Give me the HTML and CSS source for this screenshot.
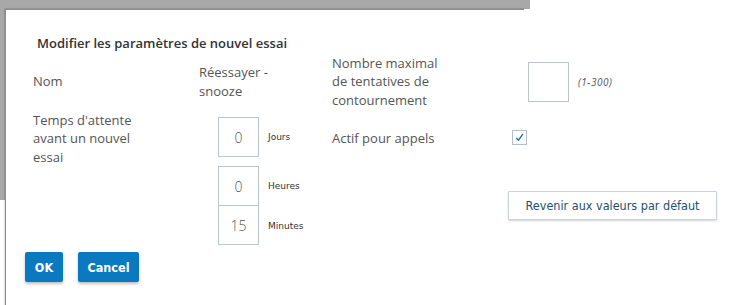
FILE: index.html
```html
<!DOCTYPE html>
<html lang="fr">
<head>
<meta charset="utf-8">
<title>Modifier les paramètres de nouvel essai</title>
<link rel="stylesheet" href="styles.css">
</head>
<body>
<div class="page">
  <div class="backdrop"></div>
  <div class="dialog">
    <h1 class="title">Modifier les paramètres de nouvel essai</h1>
    <div class="form">
      <div class="label r1">Nom</div>
      <div class="label r1">Réessayer -<br>snooze</div>
      <div class="label r1">Nombre maximal<br>de tentatives de<br>contournement</div>
      <div class="field r1 max-field">
        <div class="box"></div>
        <span class="range">(1-300)</span>
      </div>

      <div class="label ra">Temps d'attente<br>avant un nouvel<br>essai</div>
      <div class="unit-row ra jours">
        <div class="box">0</div>
        <span class="unit">Jours</span>
      </div>
      <div class="label ra">Actif pour appels</div>
      <div class="field ra">
        <span class="check">
          <svg width="9" height="9" viewBox="0 0 9 9"><path d="M1.6 5.2 L3.5 7.2 L7.6 1.4" fill="none" stroke="#1f6fb2" stroke-width="1.4" stroke-linecap="round" stroke-linejoin="round"/></svg>
        </span>
      </div>

      <div class="unit-row rb">
        <div class="box">0</div>
        <span class="unit">Heures</span>
      </div>
      <div class="unit-row rc">
        <div class="box box-joined">15</div>
        <span class="unit">Minutes</span>
      </div>
      <div class="reset-cell">
        <button class="reset">Revenir aux valeurs par défaut</button>
      </div>
    </div>
    <div class="actions">
      <button class="btn btn-ok">OK</button>
      <button class="btn btn-cancel">Cancel</button>
    </div>
  </div>
</div>
</body>
</html>
```
FILE: styles.css
```css
html, body {
  margin: 0;
  padding: 0;
  background: #ffffff;
}
body {
  font-family: "Open Sans", "Liberation Sans", sans-serif;
  width: 735px;
  height: 305px;
  overflow: hidden;
}
.page {
  position: relative;
  width: 735px;
  height: 305px;
}
.backdrop {
  width: 530px;
  height: 200px;
  background: #a8a8a8;
}
.dialog {
  position: absolute;
  left: 5px;
  top: 9px;
  width: 525px;
  height: 296px;
  background: #ffffff;
  border-left: 1px solid #8c8c8c;
  box-shadow: -1px 0 1px rgba(0,0,0,0.12);
  padding: 25px 0 0 27px;
  box-sizing: border-box;
}
.dialog::before {
  content: "";
  position: absolute;
  left: -1px;
  top: 0;
  width: 519px;
  height: 1px;
  background: #8c8c8c;
  box-shadow: 0 -1px 1px rgba(0,0,0,0.12);
}
.title {
  margin: 0 0 0 4px;
  font-size: 13px;
  line-height: 18px;
  font-weight: 600;
  color: #333333;
  white-space: nowrap;
}
.form {
  display: grid;
  grid-template-columns: 166px 133px 180px 240px;
  grid-template-rows: 59px 55px 40px 39px;
  width: 719px;
}
.label {
  font-size: 13px;
  line-height: 18.5px;
  color: #555555;
  align-self: center;
  white-space: nowrap;
}
.r1 { grid-row: 1; }
.ra { grid-row: 2; }
.rb { grid-row: 3; grid-column: 2; }
.rc { grid-row: 4; grid-column: 2; }
.field {
  display: flex;
  align-items: center;
  gap: 9px;
}
.max-field { padding-left: 16px; }
.box {
  width: 41px;
  height: 40px;
  box-sizing: border-box;
  border: 1px solid #bac5cd;
  display: flex;
  align-items: center;
  justify-content: center;
  font-size: 14px;
  color: #555555;
  font-weight: 300;
}
.box-joined {
  border-top: none;
  height: 39px;
}
.range {
  font-family: "Open Sans", sans-serif;
  font-style: italic;
  font-size: 10px;
  letter-spacing: 0.5px;
  color: #555555;
}
.unit-row {
  display: flex;
  align-items: center;
  gap: 9px;
  padding-left: 19px;
}
.jours {
  grid-column: 2;
  align-self: start;
  margin-top: 6px;
}
.unit {
  font-family: "DejaVu Sans", sans-serif;
  font-size: 9px;
  color: #333333;
}
.check {
  width: 15px;
  height: 15px;
  box-sizing: border-box;
  border: 1px solid #b3c0ca;
  display: flex;
  align-items: center;
  justify-content: center;
  margin-top: -3px;
}
.reset-cell {
  grid-row: 3 / span 2;
  grid-column: 4;
  align-self: center;
  margin-left: -4px;
}
.reset {
  width: 209px;
  height: 29px;
  background: #ffffff;
  border: 1px solid #cdd5db;
  border-radius: 1px;
  box-shadow: 0 1px 2px rgba(0,0,0,0.18);
  font-family: "DejaVu Sans Condensed", "DejaVu Sans", sans-serif;
  font-stretch: semi-condensed;
  font-size: 12.5px;
  color: #24506e;
  padding: 0;
  cursor: pointer;
}
.actions {
  display: flex;
  gap: 15px;
  margin-top: 7px;
  margin-left: -8px;
}
.btn {
  height: 30px;
  padding: 0;
  background: #0a79bf;
  color: #ffffff;
  border: none;
  border-radius: 2px;
  box-shadow: 0 2px 3px rgba(0,0,0,0.25);
  font-family: "DejaVu Sans Condensed", "DejaVu Sans", sans-serif;
  font-stretch: semi-condensed;
  font-weight: bold;
  font-size: 12.5px;
  cursor: pointer;
}
.btn-ok { width: 38px; }
.btn-cancel { width: 61px; }
```
